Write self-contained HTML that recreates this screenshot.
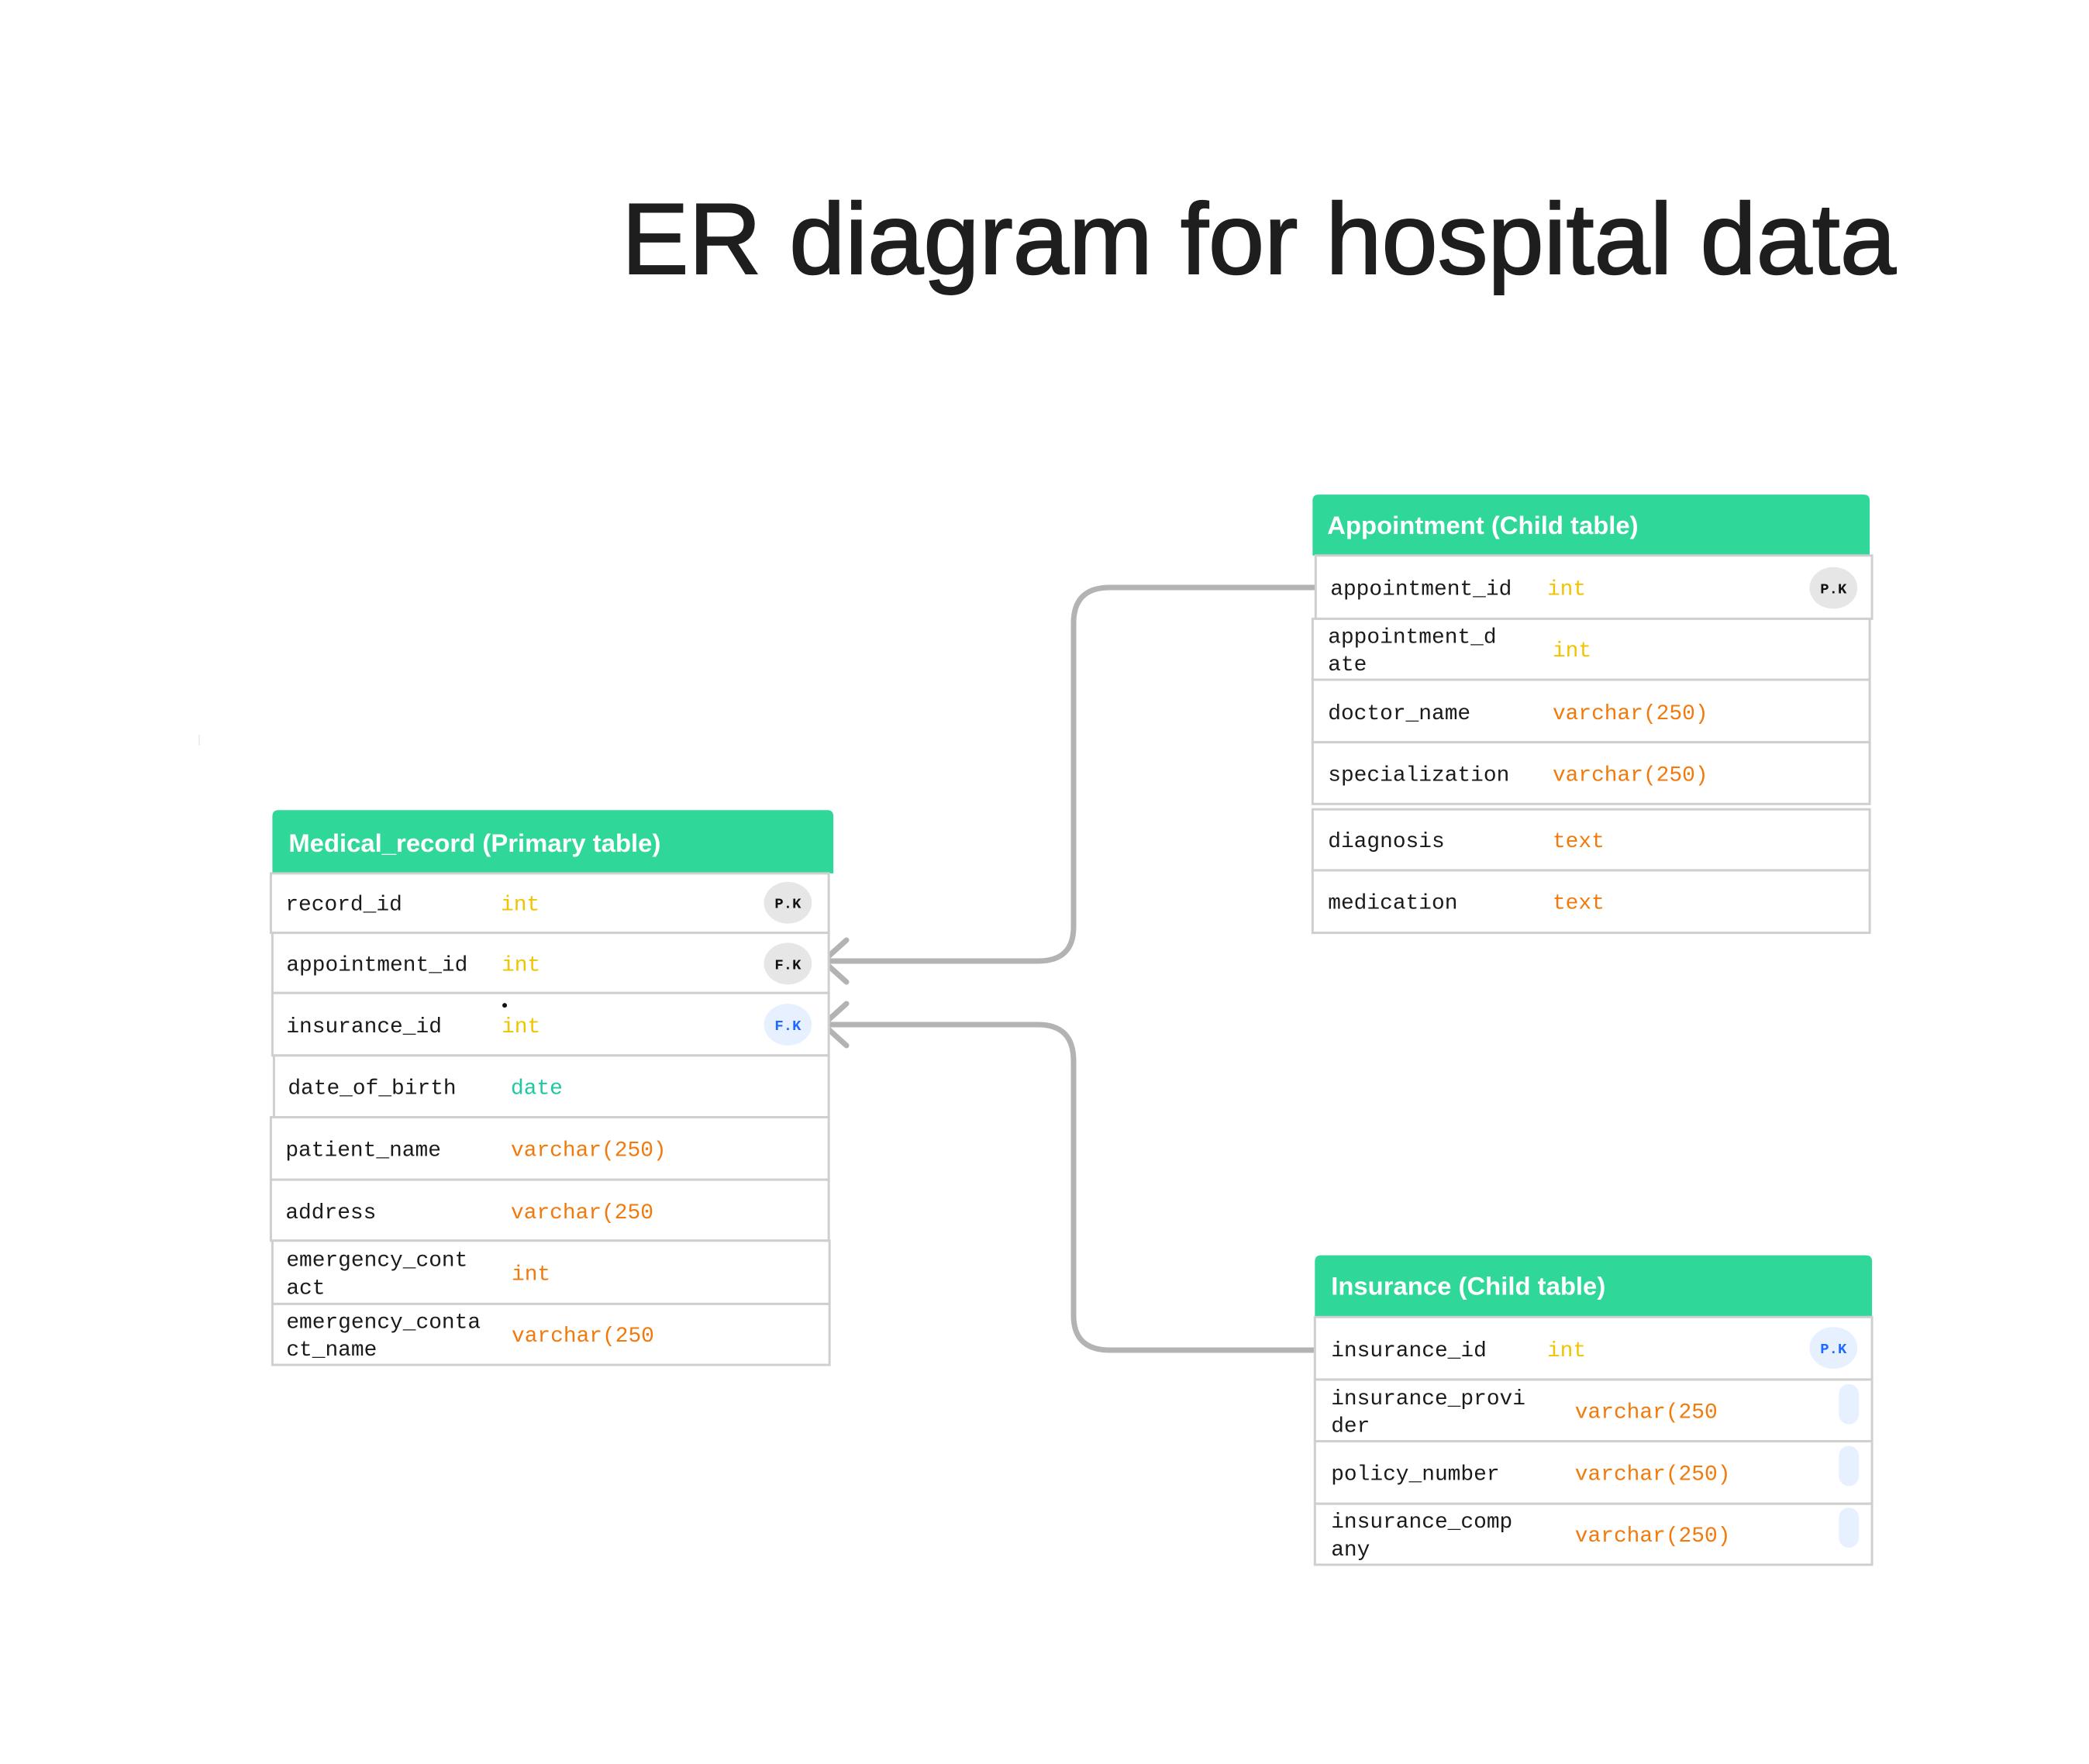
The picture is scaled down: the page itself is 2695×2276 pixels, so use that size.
<!DOCTYPE html>
<html><head><meta charset="utf-8"><style>
html,body{margin:0;padding:0;background:#fff;}
svg{display:block;}
.n{font-family:"Liberation Mono",monospace;font-size:28px;fill:#1a1a1a;}
.t{font-family:"Liberation Mono",monospace;font-size:28px;}
.y{fill:#f0c400;}.o{fill:#f27a0c;}.g{fill:#1cc9a0;}
.h{font-family:"Liberation Sans Narrow","Liberation Sans",sans-serif;font-weight:bold;font-size:33px;fill:#fff;}
.b{font-family:"Liberation Mono",monospace;font-size:19px;font-weight:bold;text-anchor:middle;}
.row{fill:#fff;stroke:#cfcfcf;stroke-width:3;}
</style></head><body>
<svg width="2695" height="2276" viewBox="0 0 2695 2276" xmlns="http://www.w3.org/2000/svg">
<text x="802" y="353" textLength="1644" lengthAdjust="spacingAndGlyphs" style="font-family:'Liberation Sans',sans-serif;font-size:130px;fill:#1e1e1e;stroke:#1e1e1e;stroke-width:2;">ER diagram for hospital data</text>
<line x1="257" y1="948" x2="257" y2="962" stroke="#ddd" stroke-width="1"/>
<!-- connectors -->
<g fill="none" stroke="#b3b3b3" stroke-width="7" stroke-linecap="round" stroke-linejoin="round" transform="translate(-5,-4)">
<path d="M1700 762 H1437 Q1390 762 1390 808 V1200 Q1390 1244 1344 1244 H1067"/>
<path d="M1097 1217 L1067 1244 L1097 1271"/>
<path d="M1700 1746 H1437 Q1390 1746 1390 1701 V1373 Q1390 1326 1344 1326 H1067"/>
<path d="M1097 1299 L1067 1326 L1097 1353"/>
</g>
<g transform="translate(-1,0) scale(0.9955)">
<!-- Medical record -->
<path d="M354 1132 V1058 Q354 1050 362 1050 H1073 Q1081 1050 1081 1058 V1132 Z" fill="#2fd898"/>
<text class="h" x="375" y="1104">Medical_record (Primary table)</text>
<rect class="row" x="352" y="1132" width="723" height="77"/>
<rect class="row" x="354" y="1209" width="721" height="78"/>
<rect class="row" x="354" y="1287" width="721" height="81"/>
<rect class="row" x="356" y="1368" width="719" height="80"/>
<rect class="row" x="352" y="1448" width="723" height="81"/>
<rect class="row" x="352" y="1529" width="723" height="79"/>
<rect class="row" x="354" y="1608" width="722" height="82"/>
<rect class="row" x="354" y="1690" width="722" height="79"/>
<text class="n" x="371" y="1180">record_id</text><text class="t y" x="650" y="1180">int</text>
<text class="n" x="372" y="1258">appointment_id</text><text class="t y" x="651" y="1258">int</text>
<text class="n" x="372" y="1338">insurance_id</text><text class="t y" x="651" y="1338">int</text>
<circle cx="655" cy="1303" r="3" fill="#111"/>
<text class="n" x="374" y="1418">date_of_birth</text><text class="t g" x="663" y="1418">date</text>
<text class="n" x="371" y="1498">patient_name</text><text class="t o" x="663" y="1498">varchar(250)</text>
<text class="n" x="371" y="1579">address</text><text class="t o" x="663" y="1579">varchar(250</text>
<text class="n" x="372" y="1641">emergency_cont</text><text class="n" x="372" y="1677">act</text><text class="t o" x="664" y="1659">int</text>
<text class="n" x="372" y="1721">emergency_conta</text><text class="n" x="372" y="1757">ct_name</text><text class="t o" x="664" y="1739">varchar(250</text>
<ellipse cx="1022" cy="1170" rx="31" ry="27" fill="#e6e6e6"/><text class="b" x="1022" y="1177" fill="#111">P.K</text>
<ellipse cx="1022" cy="1249" rx="31" ry="27" fill="#e6e6e6"/><text class="b" x="1022" y="1256" fill="#111">F.K</text>
<ellipse cx="1022" cy="1328" rx="31" ry="27" fill="#e6f0ff"/><text class="b" x="1022" y="1335" fill="#1f6bff">F.K</text>

<!-- Appointment -->
<path d="M1702 720 V649 Q1702 641 1710 641 H2416 Q2424 641 2424 649 V720 Z" fill="#2fd898"/>
<text class="h" x="1721" y="692">Appointment (Child table)</text>
<rect class="row" x="1706" y="720" width="721" height="82"/>
<rect class="row" x="1702" y="802" width="722" height="79"/>
<rect class="row" x="1702" y="881" width="722" height="81"/>
<rect class="row" x="1702" y="962" width="722" height="80"/>
<rect class="row" x="1702" y="1049" width="722" height="79"/>
<rect class="row" x="1702" y="1128" width="722" height="81"/>
<text class="n" x="1725" y="771">appointment_id</text><text class="t y" x="2006" y="771">int</text>
<text class="n" x="1722" y="833">appointment_d</text><text class="n" x="1722" y="869">ate</text><text class="t y" x="2013" y="851">int</text>
<text class="n" x="1722" y="932">doctor_name</text><text class="t o" x="2013" y="932">varchar(250)</text>
<text class="n" x="1722" y="1012">specialization</text><text class="t o" x="2013" y="1012">varchar(250)</text>
<text class="n" x="1722" y="1098">diagnosis</text><text class="t o" x="2013" y="1098">text</text>
<text class="n" x="1722" y="1178">medication</text><text class="t o" x="2013" y="1178">text</text>
<ellipse cx="2377" cy="762" rx="31" ry="27" fill="#e6e6e6"/><text class="b" x="2377" y="769" fill="#111">P.K</text>

<!-- Insurance -->
<path d="M1705 1707 V1635 Q1705 1627 1713 1627 H2419 Q2427 1627 2427 1635 V1707 Z" fill="#2fd898"/>
<text class="h" x="1726" y="1678">Insurance (Child table)</text>
<rect class="row" x="1705" y="1707" width="722" height="81"/>
<rect class="row" x="1705" y="1788" width="722" height="80"/>
<rect class="row" x="1705" y="1868" width="722" height="81"/>
<rect class="row" x="1705" y="1949" width="722" height="79"/>
<text class="n" x="1726" y="1758">insurance_id</text><text class="t y" x="2006" y="1758">int</text>
<text class="n" x="1726" y="1820">insurance_provi</text><text class="n" x="1726" y="1856">der</text><text class="t o" x="2042" y="1838">varchar(250</text>
<text class="n" x="1726" y="1918">policy_number</text><text class="t o" x="2042" y="1918">varchar(250)</text>
<text class="n" x="1726" y="1980">insurance_comp</text><text class="n" x="1726" y="2016">any</text><text class="t o" x="2042" y="1998">varchar(250)</text>
<ellipse cx="2377" cy="1747" rx="31" ry="27" fill="#e6f0ff"/><text class="b" x="2377" y="1754" fill="#1f6bff">P.K</text>
<rect x="2384" y="1794" width="26" height="52" rx="13" fill="#e6f0ff"/>
<rect x="2384" y="1874" width="26" height="52" rx="13" fill="#e6f0ff"/>
<rect x="2384" y="1954" width="26" height="52" rx="13" fill="#e6f0ff"/>
</g>
</svg>
</body></html>
